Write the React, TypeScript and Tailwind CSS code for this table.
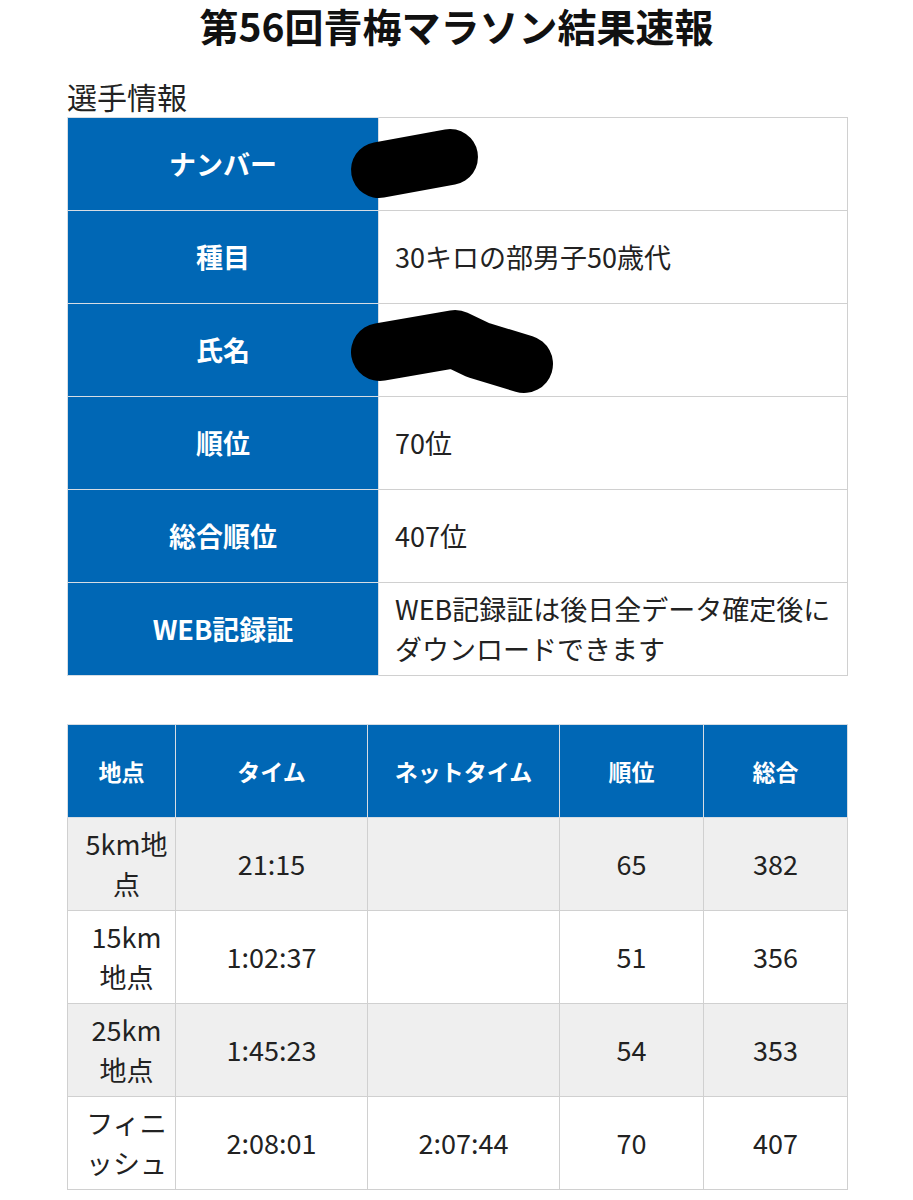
const info = [
  { label: 'ナンバー', value: '' },
  { label: '種目', value: '30キロの部男子50歳代' },
  { label: '氏名', value: '' },
  { label: '順位', value: '70位' },
  { label: '総合順位', value: '407位' },
  { label: 'WEB記録証', value: 'WEB記録証は後日全データ確定後にダウンロードできます' },
]

const splits = [
  { point: '5km地点', time: '21:15', net: '', rank: '65', total: '382' },
  { point: '15km地点', time: '1:02:37', net: '', rank: '51', total: '356' },
  { point: '25km地点', time: '1:45:23', net: '', rank: '54', total: '353' },
  { point: 'フィニッシュ', time: '2:08:01', net: '2:07:44', rank: '70', total: '407' },
]

const font = { fontFamily: '"Noto Sans CJK JP", "Noto Sans", sans-serif' }

export default function App() {
  return (
    <div className="relative w-[913px] h-[1200px] bg-white text-[#222] overflow-hidden" style={font}>
      <h1 className="pt-[2px] text-center text-[39px] leading-[46px] font-bold text-[#111]">
        第56回青梅マラソン結果速報
      </h1>

      <h2 className="ml-[67px] pt-[28px] text-[30px] leading-[40px] font-normal">選手情報</h2>

      {/* 選手情報 */}
      <table className="ml-[67px] mt-[1px] w-[781px] table-fixed border-collapse">
        <colgroup>
          <col className="w-[311px]" />
          <col />
        </colgroup>
        <tbody>
          {info.map((row) => (
            <tr key={row.label} className="h-[93px]">
              <th className="border border-[#d6dde4] bg-[#0067b5] text-center text-[27px] font-bold text-white">
                {row.label}
              </th>
              <td className="border border-[#d0d0d0] px-[16px] text-[27px] leading-[40px]">
                {row.value}
              </td>
            </tr>
          ))}
        </tbody>
      </table>

      {/* 通過記録 */}
      <table className="ml-[67px] mt-[48px] w-[781px] table-fixed border-collapse">
        <colgroup>
          <col className="w-[108px]" />
          <col className="w-[192px]" />
          <col className="w-[192px]" />
          <col className="w-[144px]" />
          <col className="w-[144px]" />
        </colgroup>
        <thead>
          <tr className="h-[93px]">
            {['地点', 'タイム', 'ネットタイム', '順位', '総合'].map((h) => (
              <th
                key={h}
                className="border border-[#d6dde4] bg-[#0067b5] text-center text-[23px] font-bold text-white"
              >
                {h}
              </th>
            ))}
          </tr>
        </thead>
        <tbody>
          {splits.map((s, i) => (
            <tr key={s.point} className={i % 2 === 0 ? 'h-[93px] bg-[#efefef]' : 'h-[93px] bg-white'}>
              <td className="border border-[#d0d0d0] pl-[16px] pr-[6px] text-center text-[27px] leading-[40px]">
                {s.point}
              </td>
              <td className="border border-[#d0d0d0] text-center text-[27px]">{s.time}</td>
              <td className="border border-[#d0d0d0] text-center text-[27px]">{s.net}</td>
              <td className="border border-[#d0d0d0] text-center text-[27px]">{s.rank}</td>
              <td className="border border-[#d0d0d0] text-center text-[27px]">{s.total}</td>
            </tr>
          ))}
        </tbody>
      </table>

      {/* redaction marks */}
      <svg className="absolute left-0 top-0 pointer-events-none" width="913" height="1200" viewBox="0 0 913 1200">
        <line x1="379" y1="170" x2="450" y2="157" stroke="#000" strokeWidth="56" strokeLinecap="round" />
        <polyline
          points="380,352 455,339 478,350 524,364"
          fill="none"
          stroke="#000"
          strokeWidth="58"
          strokeLinecap="round"
          strokeLinejoin="round"
        />
      </svg>
    </div>
  )
}
